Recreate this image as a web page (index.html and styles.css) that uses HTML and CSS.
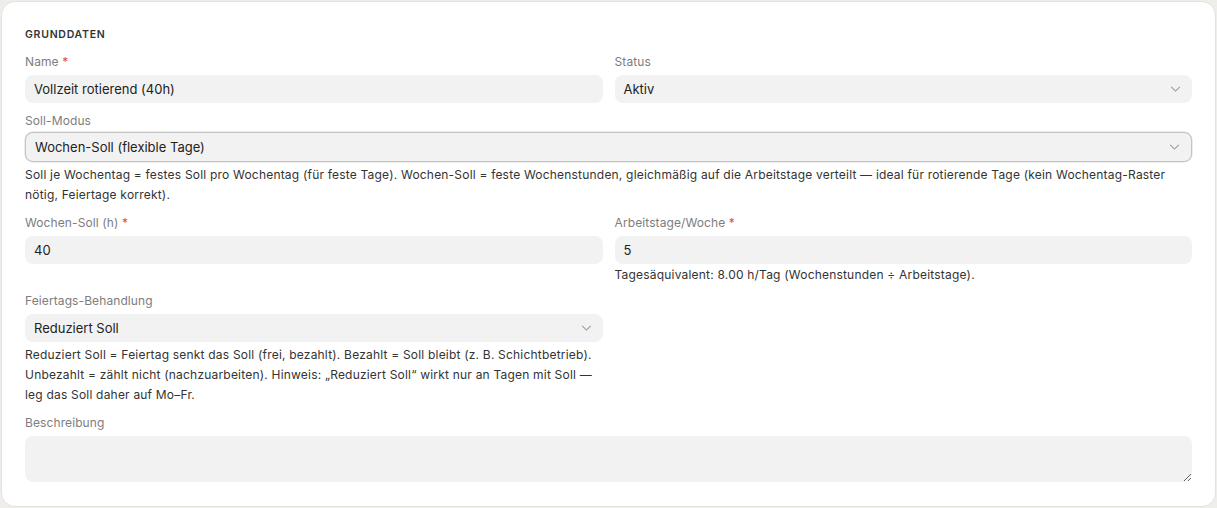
FILE: index.html
```html
<!DOCTYPE html>
<html lang="de">
<head>
    <meta charset="UTF-8">
    <meta name="viewport" content="width=device-width, initial-scale=1.0">
    <title>Arbeitszeitmodell</title>
    <link rel="stylesheet" href="styles.css">
</head>
<body>
    <div class="card">
        <h3 class="section-title">GRUNDDATEN</h3>
        <div class="form-grid">
            <div class="field">
                <label for="name">Name <span class="req">*</span></label>
                <input type="text" id="name" value="Vollzeit rotierend (40h)">
            </div>
            <div class="field">
                <label>Status</label>
                <div class="select">Aktiv<svg class="chevron" viewBox="0 0 12 7"><path d="M1 1l5 5 5-5"/></svg></div>
            </div>
            <div class="field span-2">
                <label>Soll-Modus</label>
                <div class="select focused">Wochen-Soll (flexible Tage)<svg class="chevron" viewBox="0 0 12 7"><path d="M1 1l5 5 5-5"/></svg></div>
                <p class="help">Soll je Wochentag = festes Soll pro Wochentag (für feste Tage). Wochen-Soll = feste Wochenstunden, gleichmäßig auf die Arbeitstage verteilt — ideal für rotierende Tage (kein Wochentag-Raster nötig, Feiertage korrekt).</p>
            </div>
            <div class="field">
                <label for="hours">Wochen-Soll (h) <span class="req">*</span></label>
                <input type="text" id="hours" value="40">
            </div>
            <div class="field">
                <label for="days">Arbeitstage/Woche <span class="req">*</span></label>
                <input type="text" id="days" value="5">
                <p class="help single">Tagesäquivalent: 8.00 h/Tag (Wochenstunden ÷ Arbeitstage).</p>
            </div>
            <div class="field">
                <label>Feiertags-Behandlung</label>
                <div class="select">Reduziert Soll<svg class="chevron" viewBox="0 0 12 7"><path d="M1 1l5 5 5-5"/></svg></div>
                <p class="help">Reduziert Soll = Feiertag senkt das Soll (frei, bezahlt). Bezahlt = Soll bleibt (z. B. Schichtbetrieb). Unbezahlt = zählt nicht (nachzuarbeiten). Hinweis: „Reduziert Soll“ wirkt nur an Tagen mit Soll — leg das Soll daher auf Mo–Fr.</p>
            </div>
            <div class="field"></div>
            <div class="field span-2">
                <label for="desc">Beschreibung</label>
                <textarea id="desc"></textarea>
            </div>
        </div>
    </div>
</body>
</html>
```

FILE: styles.css
```css
body, html {
    margin: 0;
    padding: 0;
    font-family: 'Inter', 'Noto Sans', sans-serif;
    background: #efeeea;
    color: #222;
}

body {
    padding: 1px 1px 0 1px;
}

.card {
    background: #fff;
    border: 1px solid #e3e2de;
    border-radius: 14px;
    padding: 26px 23px 24px 23px;
}

.section-title {
    margin: 0 0 13px 0;
    font-size: 10.5px;
    line-height: 14px;
    font-weight: 600;
    letter-spacing: 0.07em;
    color: #333;
}

.form-grid {
    display: grid;
    grid-template-columns: 1fr 1fr;
    column-gap: 12px;
    row-gap: 11px;
}

.span-2 {
    grid-column: span 2;
}

.field label {
    display: block;
    font-size: 12px;
    line-height: 14px;
    color: #7d7d7d;
    letter-spacing: 0.1px;
    margin-bottom: 6px;
}

.req {
    color: #e5484d;
}

.field input,
.select,
.field textarea {
    box-sizing: border-box;
    width: 100%;
    height: 28px;
    padding: 0 9px;
    border: none;
    border-radius: 8px;
    background: #f2f2f2;
    font-family: inherit;
    font-size: 13px;
    color: #222;
    outline: none;
}

.select {
    display: flex;
    align-items: center;
    justify-content: space-between;
}

.select.focused {
    height: 30px;
    margin-top: -2px;
    border: 1.5px solid #c4c4c4;
    box-shadow: 0 0 0 0.5px #dadada;
}

.chevron {
    width: 11px;
    height: 6px;
    margin-right: 2px;
    fill: none;
    stroke: #9a9a9a;
    stroke-width: 1.2;
}

.field textarea {
    display: block;
    height: 46px;
    resize: vertical;
    padding: 8px 9px;
}

.help {
    margin: 3px 0 0 0;
    font-size: 12px;
    line-height: 20px;
    letter-spacing: 0.2px;
    color: #333;
}

.help.single {
    line-height: 16px;
}
```
